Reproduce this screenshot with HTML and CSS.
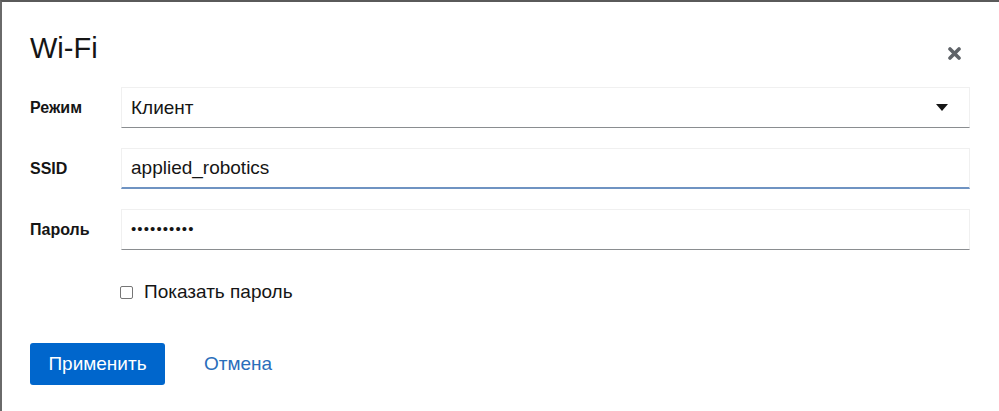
FILE: index.html
```html
<!DOCTYPE html>
<html lang="ru">
<head>
<meta charset="utf-8">
<link rel="stylesheet" href="styles.css">
</head>
<body>
<div class="modal">
  <div class="header">
    <h1 class="title">Wi-Fi</h1>
    <button class="close" aria-label="Закрыть">
      <svg width="13" height="13" viewBox="0 0 13 13"><path d="M2 2 L11 11 M11 2 L2 11" stroke="#5f6368" stroke-width="3.6" stroke-linecap="round"/></svg>
    </button>
  </div>
  <form class="form">
    <div class="row">
      <label class="label">Режим</label>
      <div class="control select">
        <span class="value">Клиент</span>
        <svg class="caret" width="12" height="7" viewBox="0 0 12 7"><path d="M0 0 H12 L6 7 Z" fill="#151515"/></svg>
      </div>
    </div>
    <div class="row">
      <label class="label">SSID</label>
      <div class="control focus"><span class="value">applied_robotics</span></div>
    </div>
    <div class="row">
      <label class="label">Пароль</label>
      <div class="control"><span class="value dots">••••••••••</span></div>
    </div>
    <div class="check-row">
      <span class="box"></span>
      <span class="check-label">Показать пароль</span>
    </div>
    <div class="actions">
      <button type="button" class="primary">Применить</button>
      <button type="button" class="link">Отмена</button>
    </div>
  </form>
</div>
</body>
</html>
```
FILE: styles.css
```css
html, body {
  margin: 0;
  padding: 0;
  background: #fff;
}
body {
  width: 999px;
  height: 411px;
  box-sizing: border-box;
  border-top: 2px solid #5a5a5a;
  border-left: 2px solid #6a6a6a;
  font-family: "Liberation Sans", Arial, sans-serif;
  color: #151515;
  overflow: hidden;
}
.modal {
  padding: 0 29px 0 28px;
}
.header {
  display: flex;
  align-items: center;
  justify-content: space-between;
  height: 85px;
}
.title {
  margin: 0;
  margin-top: 7px;
  font-size: 29px;
  font-weight: normal;
  line-height: 1;
  align-self: flex-start;
  padding-top: 25px;
}
.close {
  border: 0;
  background: none;
  padding: 0;
  margin-right: 9px;
  margin-top: 18px;
  display: flex;
}
.form {
  display: flex;
  flex-direction: column;
}
.row {
  display: flex;
  align-items: center;
  height: 41px;
  margin-bottom: 20px;
}
.label {
  width: 91px;
  font-size: 16px;
  font-weight: bold;
}
.control {
  flex: 1;
  height: 41px;
  box-sizing: border-box;
  border: 1px solid #f0f0f0;
  border-bottom: 1px solid #8a8d90;
  display: flex;
  align-items: center;
  padding: 0 9px;
  font-size: 19px;
}
.control.focus {
  border-bottom: 2px solid #6f93c2;
}
.select {
  justify-content: space-between;
  padding-right: 21px;
}
.dots {
  font-size: 15px;
  letter-spacing: 1.1px;
  position: relative;
  top: -1px;
}
.check-row {
  display: flex;
  align-items: center;
  margin-left: 90px;
  margin-top: 11px;
  height: 22px;
}
.box {
  width: 11px;
  height: 11px;
  border: 1px solid #767676;
  border-radius: 2px;
  margin-right: 11px;
}
.check-label {
  font-size: 19px;
}
.actions {
  display: flex;
  align-items: center;
  margin-top: 40px;
}
.primary {
  background: #0066cc;
  color: #fff;
  border: 0;
  border-radius: 3px;
  height: 42px;
  width: 135px;
  font-family: inherit;
  font-size: 19px;
}
.link {
  background: none;
  border: 0;
  color: #2a6ebb;
  font-family: inherit;
  font-size: 19px;
  margin-left: 26px;
  padding: 0 13px;
}
```
